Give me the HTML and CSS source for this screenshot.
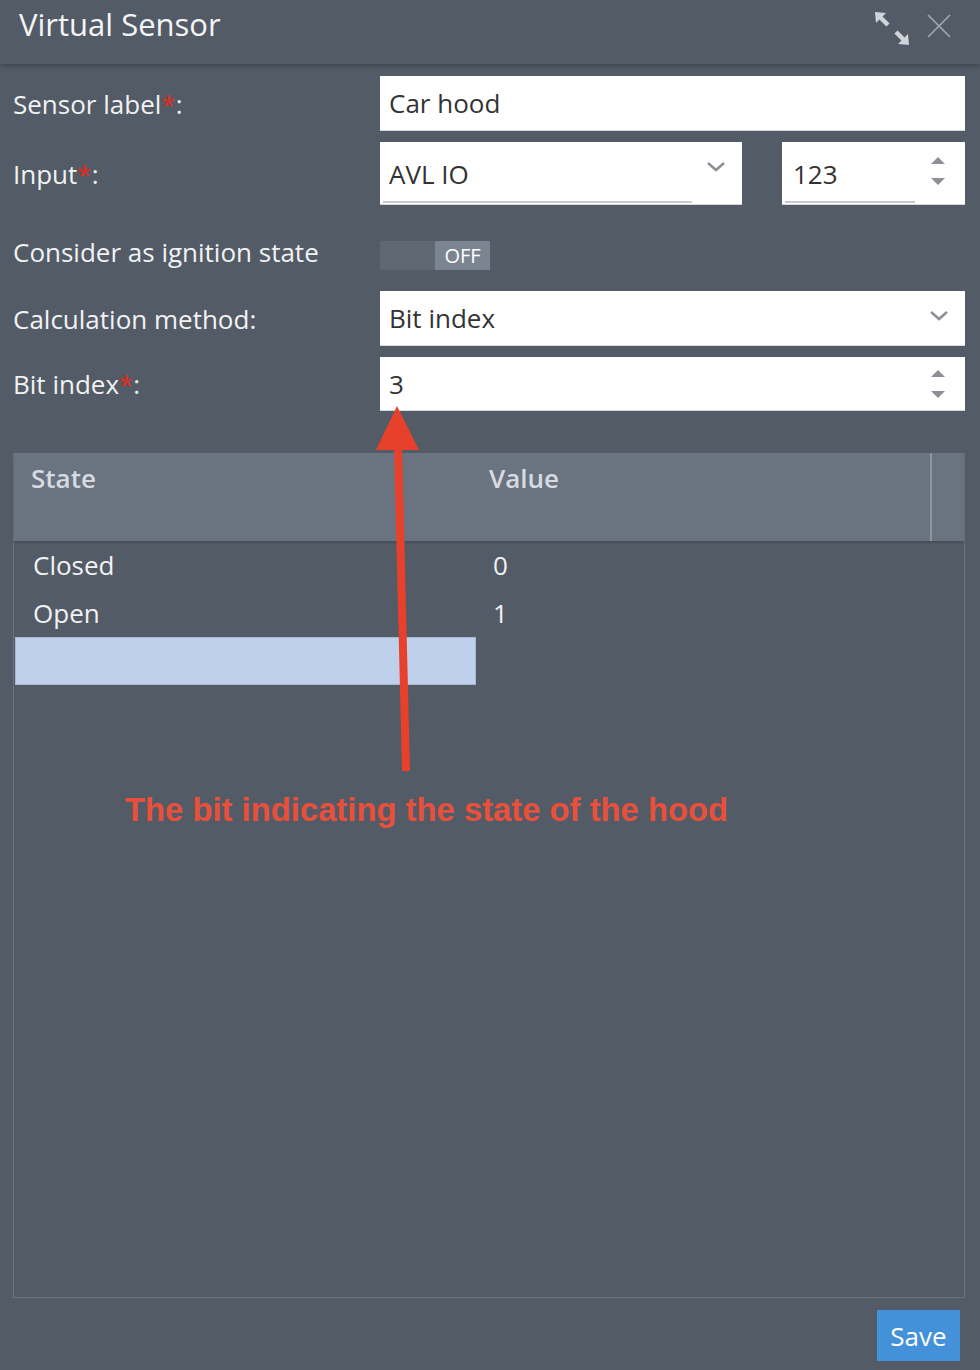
FILE: index.html
```html
<!DOCTYPE html>
<html lang="en">
<head>
<title>Virtual Sensor</title>
<meta charset="utf-8">
<meta name="viewport" content="width=device-width, initial-scale=1">
<link rel="stylesheet" href="styles.css">
</head>
<body>

<div class="dialog">
  <!-- Title bar -->
  <div class="titlebar">
    <span class="title">Virtual Sensor</span>
    <div class="tools">
      <svg class="expand" width="36" height="36" viewBox="0 0 36 36">
        <polygon points="0,0 11,1 1,11" fill="#d0d4d9"/>
        <line x1="4" y1="4" x2="13" y2="13" stroke="#d0d4d9" stroke-width="4.5"/>
        <polygon points="34,33 23,32 33,22" fill="#d0d4d9"/>
        <line x1="21" y1="20" x2="30" y2="29" stroke="#d0d4d9" stroke-width="4.5"/>
      </svg>
      <svg class="close" width="26" height="26" viewBox="0 0 26 26">
        <line x1="2" y1="2" x2="24" y2="24" stroke="#a3a9b1" stroke-width="1.6"/>
        <line x1="24" y1="2" x2="2" y2="24" stroke="#a3a9b1" stroke-width="1.6"/>
      </svg>
    </div>
  </div>

  <!-- Form -->
  <form class="form" action="javascript:void(0)">
    <label class="label">Sensor label<span class="req">*</span>:</label>
    <div class="field text">Car hood</div>

    <label class="label">Input<span class="req">*</span>:</label>
    <div class="input_row">
      <div class="field select tall">AVL IO
        <svg class="chevron" width="18" height="10" viewBox="0 0 18 10"><polyline points="1,1 9,8 17,1" fill="none" stroke="#8d9097" stroke-width="2.6"/></svg>
      </div>
      <div class="field number tall">123
        <svg class="spin" width="16" height="28" viewBox="0 0 16 28"><polygon points="8,0 15,7 1,7" fill="#8d9097"/><polygon points="1,21 15,21 8,28" fill="#8d9097"/></svg>
      </div>
    </div>

    <label class="label ignition">Consider as ignition state</label>
    <div class="toggle_cell">
      <div class="toggle"><span class="knob"></span><span class="state">OFF</span></div>
    </div>

    <label class="label">Calculation method:</label>
    <div class="field select">Bit index
      <svg class="chevron" width="18" height="10" viewBox="0 0 18 10"><polyline points="1,1 9,8 17,1" fill="none" stroke="#8d9097" stroke-width="2.6"/></svg>
    </div>

    <label class="label">Bit index<span class="req">*</span>:</label>
    <div class="field number">3
      <svg class="spin" width="16" height="28" viewBox="0 0 16 28"><polygon points="8,0 15,7 1,7" fill="#8d9097"/><polygon points="1,21 15,21 8,28" fill="#8d9097"/></svg>
    </div>
  </form>

  <!-- States grid -->
  <div class="grid">
    <div class="grid_head">
      <div class="col_state">State</div>
      <div class="col_value">Value</div>
      <div class="col_scroll"></div>
    </div>
    <div class="grid_row">
      <div class="col_state">Closed</div>
      <div class="col_value">0</div>
    </div>
    <div class="grid_row">
      <div class="col_state">Open</div>
      <div class="col_value">1</div>
    </div>
    <div class="grid_row">
      <div class="col_state editing"></div>
      <div class="col_value"></div>
    </div>
  </div>

  <div class="footer">
    <button class="save" type="button">Save</button>
  </div>

  <!-- Annotation over the dialog -->
  <svg class="annotation" width="980" height="1370" viewBox="0 0 980 1370">
    <line x1="406" y1="771" x2="398" y2="445" stroke="#e8412b" stroke-width="8"/>
    <polygon points="397,406 376,450 419,450" fill="#e8412b"/>
  </svg>
  <div class="note">The bit indicating the state of the hood</div>
</div>

</body>
</html>
```

FILE: styles.css
```css
* {
  box-sizing: border-box;
}

body {
  margin: 0;
  background-color: #535b66;
  font-family: "Open Sans", "DejaVu Sans", sans-serif;
  color: #f1f2f4;
}

.dialog {
  position: relative;
  width: 980px;
  height: 1370px;
  background-color: #535b66;
}

/* Title bar */
.titlebar {
  display: flex;
  justify-content: space-between;
  height: 64px;
  padding: 2px 28px 0 19px;
  box-shadow: 0 3px 4px rgba(0, 0, 0, 0.18);
  position: relative;
}

.title {
  font-size: 31px;
  line-height: 44px;
  color: #f4f5f6;
}

.tools {
  display: flex;
  align-items: flex-start;
  gap: 15px;
}

.tools .expand {
  margin-top: 10px;
}

.tools .close {
  margin-top: 11px;
}

/* Form */
.form {
  display: grid;
  grid-template-columns: 380px 585px;
  grid-template-rows: 55px 63px 64px 55px 54px;
  row-gap: 11px;
  padding-top: 12px;
}

.label {
  display: flex;
  align-items: center;
  padding-left: 13px;
  font-size: 26px;
  color: #f1f2f4;
}

.label.ignition {
  padding-top: 8px;
}

.req {
  color: #e8281c;
}

.field {
  position: relative;
  display: flex;
  align-items: center;
  background-color: #fff;
  padding-left: 9px;
  font-size: 26px;
  color: #333;
  border-bottom: 1px solid #d6d8db;
}

.field.tall {
  padding-top: 2px;
}

.field.tall:after {
  content: "";
  position: absolute;
  left: 3px;
  right: 50px;
  bottom: 1px;
  height: 2px;
  background-color: #c6c8cc;
}

.input_row {
  display: flex;
  gap: 40px;
}

.input_row .select {
  width: 362px;
}

.input_row .number {
  flex: 1;
  padding-left: 11px;
}

.chevron {
  position: absolute;
  right: 17px;
  top: 50%;
  margin-top: -7px;
}

.input_row .chevron {
  right: 17px;
  margin-top: -11px;
}

.spin {
  position: absolute;
  right: 19px;
  top: 50%;
  margin-top: -14px;
}

.input_row .spin {
  margin-top: -16px;
}

/* Toggle */
.toggle_cell {
  display: flex;
  align-items: center;
  padding-top: 15px;
}

.toggle {
  display: flex;
  width: 110px;
  height: 29px;
}

.toggle .knob {
  width: 55px;
  background-color: #5f6772;
}

.toggle .state {
  flex: 1;
  background-color: #7b8591;
  color: #fff;
  font-size: 20px;
  line-height: 29px;
  text-align: center;
}

/* Grid */
.grid {
  margin: 42px 15px 0 13px;
  height: 845px;
  border: 1px solid #6b7380;
  border-top: none;
}

.grid_head {
  display: flex;
  height: 88px;
  background-color: #6a7480;
  box-shadow: 0 2px 2px rgba(0, 0, 0, 0.15);
  font-size: 26px;
  font-weight: 600;
  color: #d7dbe0;
}

.grid_head .col_state {
  width: 458px;
  padding: 7px 0 0 17px;
}

.grid_head .col_value {
  width: 458px;
  padding: 7px 0 0 17px;
}

.grid_head .col_scroll {
  flex: 1;
  border-left: 2px solid #8d96a1;
}

.grid_row {
  display: flex;
  height: 48px;
  font-size: 26px;
  color: #f1f2f4;
}

.grid_row .col_state {
  width: 461px;
  padding: 6px 0 0 18px;
  margin-left: 1px;
}

.grid_row .col_value {
  padding: 6px 0 0 17px;
}

.grid_row .editing {
  height: 48px;
  background-color: #bfd0ec;
  border: 1px solid #a7b8d4;
}

/* Footer */
.footer {
  display: flex;
  justify-content: flex-end;
  padding: 12px 20px 0 0;
}

.save {
  width: 83px;
  height: 51px;
  border: none;
  background-color: #4391d9;
  color: #fff;
  font-family: "Open Sans", sans-serif;
  font-size: 26px;
  padding: 0;
}

/* Annotation */
.annotation {
  position: absolute;
  left: 0;
  top: 0;
  pointer-events: none;
}

.note {
  position: absolute;
  left: 125px;
  top: 791px;
  font-family: "Liberation Sans", Arial, sans-serif;
  font-weight: bold;
  font-size: 32.8px;
  color: #e8503c;
}
```
